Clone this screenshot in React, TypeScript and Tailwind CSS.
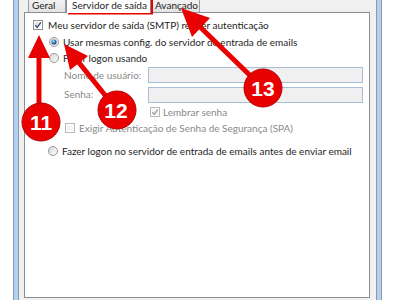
import React from "react";

const ui = "font-['Lato','Noto_Sans',sans-serif] text-[10px] leading-[12px]";

function CheckBox({ checked, disabled }: { checked?: boolean; disabled?: boolean }) {
  const border = disabled ? "#b9b9b9" : "#8e8f8f";
  const mark = disabled ? "#a3a3a3" : "#3b4f86";
  return (
    <svg width="10" height="10" viewBox="0 0 10 10" className="shrink-0">
      <defs>
        <linearGradient id={disabled ? "cbd" : "cbe"} x1="0" y1="0" x2="1" y2="1">
          <stop offset="0" stopColor={disabled ? "#f4f4f4" : "#dcdcdc"} />
          <stop offset="1" stopColor={disabled ? "#f4f4f4" : "#ffffff"} />
        </linearGradient>
      </defs>
      <rect x="0.5" y="0.5" width="9" height="9" fill="#fff" stroke={border} />
      <rect x="2" y="2" width="6" height="6" fill={`url(#${disabled ? "cbd" : "cbe"})`} />
      {checked && (
        <path d="M2.3 5.2 L4.2 7.3 L7.8 2.4" fill="none" stroke={mark} strokeWidth="1.4" />
      )}
    </svg>
  );
}

function Radio({ selected }: { selected?: boolean }) {
  return (
    <svg width="10" height="10" viewBox="0 0 10 10" className="shrink-0">
      <defs>
        <linearGradient id="rb" x1="0" y1="0" x2="1" y2="1">
          <stop offset="0" stopColor="#d6d6d6" />
          <stop offset="1" stopColor="#ffffff" />
        </linearGradient>
        <radialGradient id="rdot" cx="0.4" cy="0.35" r="0.7">
          <stop offset="0" stopColor="#b9e3ff" />
          <stop offset="0.5" stopColor="#2f7dbf" />
          <stop offset="1" stopColor="#12365d" />
        </radialGradient>
      </defs>
      <circle cx="5" cy="5" r="4.5" fill="url(#rb)" stroke="#8e8f8f" strokeWidth="0.9" />
      {selected && <circle cx="5" cy="5" r="2.6" fill="url(#rdot)" />}
    </svg>
  );
}

function Frame() {
  return <div className="w-[6px] border-x border-[#8d99a8] bg-[#b3d1f0]" />;
}

// tabs are cut by the top of the picture, so only their lower part shows
function Tab({ label, active, className }: { label: string; active?: boolean; className: string }) {
  return (
    <div
      className={`${className} ${
        active
          ? "h-[13px] bg-white border-x border-[#898c95] relative z-10 -mb-px"
          : "h-[12px] bg-gradient-to-b from-[#f2f2f2] to-[#e3e3e3] border-x border-[#9a9da4]"
      }`}
    >
      <span className="block whitespace-nowrap text-[#1e1e1e] leading-[10px]">{label}</span>
    </div>
  );
}

function Annotations() {
  const red = "#e90000";
  return (
    <svg className="absolute inset-0 pointer-events-none" width="400" height="300" viewBox="0 0 400 300">
      <rect x="70" y="-4" width="81" height="16.5" fill="none" stroke={red} strokeWidth="4" />
      {/* 11 */}
      <line x1="39" y1="110" x2="39" y2="52" stroke={red} strokeWidth="5" />
      <polygon points="39,35 28,58 50,58" fill={red} />
      <circle cx="41" cy="122" r="19" fill={red} stroke="#b30000" strokeWidth="1" />
      <text x="41" y="130" textAnchor="middle" fill="#fff" fontFamily="Liberation Sans, Arial, sans-serif" fontWeight="700" fontSize="21">11</text>
      {/* 12 */}
      <line x1="117" y1="110" x2="76" y2="59" stroke={red} strokeWidth="5" />
      <polygon points="64,44 88,56 70,70" fill={red} />
      <circle cx="117" cy="110" r="19" fill={red} stroke="#b30000" strokeWidth="1" />
      <text x="116" y="118" textAnchor="middle" fill="#fff" fontFamily="Liberation Sans, Arial, sans-serif" fontWeight="700" fontSize="21">12</text>
      {/* 13 */}
      <line x1="263" y1="88" x2="197" y2="24" stroke={red} strokeWidth="5" />
      <polygon points="181,8 210,18 192,37" fill={red} />
      <circle cx="263" cy="88" r="19" fill={red} stroke="#b30000" strokeWidth="1" />
      <text x="263" y="96" textAnchor="middle" fill="#fff" fontFamily="Liberation Sans, Arial, sans-serif" fontWeight="700" fontSize="21">13</text>
    </svg>
  );
}

export default function App() {
  return (
    <div className={`relative flex h-[300px] w-[400px] overflow-hidden bg-white ${ui}`}>
      <div className="w-[13px]" />
      <Frame />
      <div className="flex w-[357px] flex-col bg-[#f0f0f0] pl-[5px] pr-[6px] pb-[2px]">
        <div className="flex h-[12px] pl-[4px] items-start">
          <Tab label="Geral" className="w-[38px] pl-[3px]" />
          <Tab label="Servidor de saída" className="w-[85px] pl-[5px]" active />
          <Tab label="Avançado" className="w-[49px] pl-[4px] border-l-0" />
        </div>
        <div className="flex-1 border border-[#898c95] bg-white pt-[4px] text-[#1e1e1e]">
          <div className="flex h-[16px] items-center pl-[8px] gap-[5px]">
            <CheckBox checked />
            <span>Meu servidor de saída (SMTP) requer autenticação</span>
          </div>
          <div className="flex h-[17px] items-center pl-[24px] gap-[4px]">
            <Radio selected />
            <span>Usar mesmas config. do servidor de entrada de emails</span>
          </div>
          <div className="flex h-[15px] items-center pl-[24px] gap-[4px]">
            <Radio />
            <span>Fazer logon usando</span>
          </div>
          <div className="flex h-[20px] items-center pl-[39px] text-[#8a8a8a]">
            <span className="w-[84px]">Nome de usuário:</span>
            <div className="h-[16px] w-[215px] border border-[#a9bdd6] bg-[#f0f0f0]" />
          </div>
          <div className="flex h-[20px] items-center pl-[39px] text-[#8a8a8a]">
            <span className="w-[84px] -mt-[3px]">Senha:</span>
            <div className="h-[16px] w-[215px] border border-[#a9bdd6] bg-[#f0f0f0]" />
          </div>
          <div className="flex h-[14px] items-center pl-[125px] gap-[3px] text-[#8a8a8a]">
            <CheckBox checked disabled />
            <span>Lembrar senha</span>
          </div>
          <div className="flex h-[17px] items-center pl-[40px] gap-[4px] text-[#8a8a8a]">
            <CheckBox disabled />
            <span>Exigir Autenticação de Senha de Segurança (SPA)</span>
          </div>
          <div className="mt-[7px] flex h-[15px] items-center pl-[23px] gap-[4px]">
            <Radio />
            <span>Fazer logon no servidor de entrada de emails antes de enviar email</span>
          </div>
        </div>
      </div>
      <Frame />
      <div className="flex-1" />
      <Annotations />
    </div>
  );
}
